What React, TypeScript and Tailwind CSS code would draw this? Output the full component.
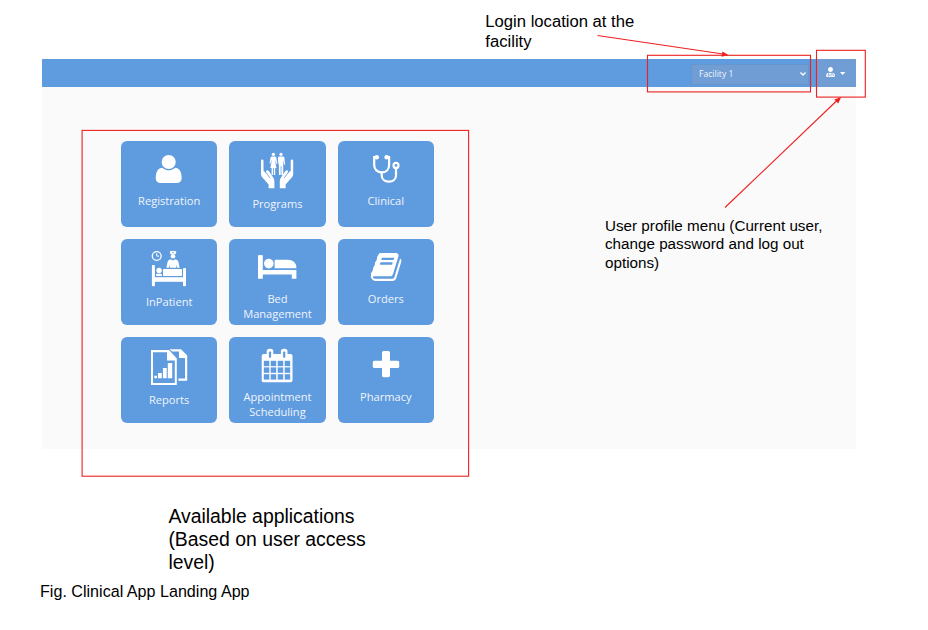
import type { ReactNode } from "react";
import { FaUserMd } from "react-icons/fa";

const BLUE = "#5f9bdf";

const UserIcon = () => (
  <path
    transform="translate(31.2 11.7) scale(.0184 .0182)"
    d="M1600 1405q0 120-73 189.5t-194 69.5h-874q-121 0-194-69.5t-73-189.5q0-53 3.5-103.5t14-109 26.5-108.5 43-97.5 62-81 85.5-53.5 111.5-20q9 0 42 21.5t74.5 48 108 48 133.5 21.5 133.5-21.5 108-48 74.5-48 42-21.5q61 0 111.5 20t85.5 53.5 62 81 43 97.5 26.5 108.5 14 109 3.5 103.5zm-320-893q0 159-112.5 271.5t-271.5 112.5-271.5-112.5-112.5-271.5 112.5-271.5 271.5-112.5 271.5 112.5 112.5 271.5z"
  />
);

const Hand = () => (
  <>
    <path d="M32 19.8Q32 18.4 33.2 18.4Q34.5 18.4 34.5 19.8V29.4L38.2 33.6L37 31.5Q36.6 29.6 38 29.2Q39 29 40 30.3L44.2 36.4Q45.4 38 45.4 40V47.3H39.6V43.4L33 36Q32 34.6 32 33Z" />
    <path d="M36.2 30.4L41 37" stroke={BLUE} strokeWidth=".8" fill="none" />
  </>
);

const ProgramsIcon = () => (
  <>
    <Hand />
    <g transform="matrix(-1 0 0 1 96.2 0)">
      <Hand />
    </g>
    <circle cx="44.4" cy="13.3" r="1.6" />
    <circle cx="52" cy="13.3" r="1.6" />
    <path d="M42.8 15.5H46Q47 15.5 47.3 16.5L48.2 22.4L47.4 22.8L45.9 18.5L47.5 27H46.2V34H44.8V27H44V34H42.6V27H41.3L42.9 18.5L41.3 22.8L40.5 22.4L41.6 16.5Q41.9 15.5 42.8 15.5Z" />
    <path d="M50.2 15.5H54Q55.2 15.5 55.4 16.7L56.1 23.4L55.1 23.7L54.2 18.5V34H52.4V25H51.7V34H49.9V18.5L49.5 23.6L48.8 23L49 16.7Q49.2 15.5 50.2 15.5Z" />
  </>
);

const StethoscopeIcon = () => (
  <>
    <g fill="none" stroke="white" strokeWidth="2.2" strokeLinecap="round">
      <path d="M38.5 16.2H36.2V24C36.2 28.5 39.5 31.4 43.7 31.4C47.9 31.4 51.1 28.5 51.1 24V16.2H48.8" />
      <path d="M43.7 31.5V34.3C43.7 38.2 46.7 40.7 50.9 40.7C55.1 40.7 58 38.2 58 34.3V28" />
      <circle cx="58" cy="24.4" r="2.5" />
    </g>
    <circle cx="38.8" cy="16.2" r="2.2" />
    <circle cx="48.6" cy="16.2" r="2.2" />
  </>
);

const InpatientIcon = () => (
  <>
    <circle cx="35.7" cy="17" r="4.4" fill="none" stroke="white" strokeWidth="1.3" />
    <path d="M35.7 14.2V17.1H38" fill="none" stroke="white" strokeWidth="1" />
    <path d="M48.6 12.6Q52 11 55.4 12.6L54.5 15.3H49.5Z" />
    <path d="M52 12.5V14.5M51 13.5H53" stroke={BLUE} strokeWidth=".5" />
    <circle cx="52" cy="17.2" r="2.3" />
    <path d="M49.5 20.2L52 21.4L54.5 20.2Q57 20.6 57.5 23L58.6 28.7H56.2L55.6 25.5L55.3 28.7H48.7L48.4 25.5L47.8 28.7H45.4L46.5 23Q47 20.6 49.5 20.2Z" />
    <rect x="30.9" y="26" width="3" height="21.3" rx="1" />
    <rect x="62" y="29" width="3" height="18.3" rx="1" />
    <rect x="33" y="38.2" width="30" height="4.6" />
    <circle cx="38.1" cy="31.5" r="2.7" />
    <rect x="35" y="34.8" width="6" height="2.2" rx="1" />
    <rect x="42" y="30" width="19" height="7" rx=".8" />
  </>
);

const BedIcon = () => (
  <>
    <path d="M30 16H32.8Q33.8 16 33.8 17V31H67.4V39.8H62.8V35.4H33.8V39.8H29V17Q29 16 30 16Z" />
    <circle cx="39.8" cy="24.6" r="4.8" />
    <path d="M46.6 20.8H59.5Q67.4 21.4 67.4 29.2H45.6V21.8Q45.6 20.8 46.6 20.8Z" />
  </>
);

const BookIcon = () => (
  <path
    transform="translate(32.8 11.7) scale(.0184 .0182)"
    d="M1639 478q40 57 18 129l-275 906q-19 64-76.5 107.5t-122.5 43.5h-923q-77 0-148.5-53.5t-99.5-131.5q-24-67-2-127 0-4 3-27t4-37q1-8-3-21.5t-3-19.5q2-11 8-21t16.5-23.5 16.5-23.5q23-38 45-91.5t30-91.5q3-10 .5-30t-.5-28q3-11 17-28t17-23q21-36 42-92t25-90q1-9-2.5-32t.5-28q4-13 22-30.5t22-22.5q19-26 42.5-84.5t27.5-96.5q1-8-3-25.5t-2-26.5q2-8 9-18t18-23 17-21q8-12 16.5-30.5t15-35 16-36 19.5-32 26.5-23.5 36-11.5 47.5 5.5l-1 3q38-9 51-9h761q74 0 114 56t18 130l-274 906q-36 119-71.5 153.5t-128.5 34.5h-869q-27 0-38 15-11 16-1 43 24 70 144 70h923q29 0 56-15.5t35-41.5l300-987q7-22 5-57 38 15 59 43zm-1064 2q-4 13 2 22.5t20 9.5h608q13 0 25.5-9.5t16.5-22.5l21-64q4-13-2-22.5t-20-9.5h-608q-13 0-25.5 9.5t-16.5 22.5zm-83 256q-4 13 2 22.5t20 9.5h608q13 0 25.5-9.5t16.5-22.5l21-64q4-13-2-22.5t-20-9.5h-608q-13 0-25.5 9.5t-16.5 22.5z"
  />
);

const ReportsIcon = () => (
  <>
    <path d="M48.6 12.2H60L66.2 18.4V43.8H57.4V41.6H64V21H58V14.4H51Z" />
    <path
      fillRule="evenodd"
      d="M30 13H48L55.8 21.4V48H30ZM32 15.2V46H53.8V23.4H46V15.2Z"
    />
    <path d="M33.3 38.8H36V41.2H33.3ZM37 36H40.8V41.2H37ZM41.9 31H45.7V41.2H41.9ZM46.8 26H51.2V41.2H46.8Z" />
  </>
);

const CalendarIcon = () => (
  <>
    <rect x="32.7" y="17" width="30.8" height="28.2" rx="2" />
    <rect x="37.7" y="11.8" width="6.6" height="10" rx="2.8" />
    <rect x="51.9" y="11.8" width="6.6" height="10" rx="2.8" />
    <g fill={BLUE}>
      <rect x="39.9" y="14.4" width="2.2" height="6.4" rx=".8" />
      <rect x="54.1" y="14.4" width="2.2" height="6.4" rx=".8" />
      {[23.8, 30.4, 37.2].map((y) =>
        [34.8, 41.7, 48.7, 55.7].map((x) => (
          <rect key={`${x}-${y}`} x={x} y={y} width="5.5" height="5.4" />
        )),
      )}
    </g>
  </>
);

const PlusIcon = () => (
  <>
    <rect x="34.8" y="23.8" width="26.4" height="7.2" rx="1.6" />
    <rect x="44" y="14" width="8" height="26.2" rx="1.6" />
  </>
);

const apps: { label: string; icon: ReactNode; tall?: boolean }[] = [
  { label: "Registration", icon: <UserIcon /> },
  { label: "Programs", icon: <ProgramsIcon />, tall: true },
  { label: "Clinical", icon: <StethoscopeIcon /> },
  { label: "InPatient", icon: <InpatientIcon />, tall: true },
  { label: "Bed Management", icon: <BedIcon /> },
  { label: "Orders", icon: <BookIcon /> },
  { label: "Reports", icon: <ReportsIcon />, tall: true },
  { label: "Appointment Scheduling", icon: <CalendarIcon /> },
  { label: "Pharmacy", icon: <PlusIcon /> },
];

function Tile({ label, icon, tall }: { label: string; icon: ReactNode; tall?: boolean }) {
  return (
    <button className="flex h-[86px] flex-col items-center rounded-[6px] bg-[#5f9bdf] font-['Open_Sans',sans-serif] text-[11.1px] leading-[14.2px] text-[#f0f5fc]">
      <svg
        viewBox="0 0 96 50"
        className={tall ? "mb-[6.4px] h-[50px] w-[96px] shrink-0" : "mb-[3.4px] h-[50px] w-[96px] shrink-0"}
        fill="white"
      >
        {icon}
      </svg>
      <span className="w-[82px] text-center">{label}</span>
    </button>
  );
}

export default function App() {
  return (
    <main className="relative h-[630px] w-[928px] overflow-hidden bg-white font-['Liberation_Sans',Arial,sans-serif] text-black">
      <p className="h-[59px] w-[660px] pl-[485.3px] pt-[12px] text-[16.65px] leading-[20.4px]">
        Login location at the facility
      </p>

      <section className="ml-[42px] h-[390px] w-[814px] bg-[#fafafa]">
        <header className="flex h-[28px] items-center justify-end bg-[#5f9bdf]">
          <div className="mr-[8px] mt-[2px] flex h-[21px] w-[118px] items-center justify-between border border-[#6795cd] bg-[#719dd5] pl-[7px] pr-[2px] font-['Open_Sans',sans-serif] text-[8.6px] text-[#f0f5fc]">
            <span>Facility 1</span>
            <svg width="6" height="4" viewBox="0 0 6 4" fill="none" stroke="white" strokeWidth="1.4">
              <path d="M.5 .6L3 3L5.5 .6" />
            </svg>
          </div>
          <div className="flex h-full w-[39px] items-start gap-[5px] bg-[#719dd5] pl-[9px] pt-[7.5px]">
            <FaUserMd className="h-[10px] w-[9px] text-white" />
            <svg width="6" height="3" viewBox="0 0 6 3" fill="white" className="mt-[5px]">
              <path d="M0 0H5.4L2.7 3Z" />
            </svg>
          </div>
        </header>

        <div className="flex items-start pl-[79px]">
          <div className="grid w-[313px] grid-cols-3 gap-[12px] pt-[54px]">
            {apps.map((app) => (
              <Tile key={app.label} {...app} />
            ))}
          </div>
          <p className="ml-[171px] mt-[130px] w-[225px] text-[15.22px] leading-[18.3px]">
            User profile menu (Current user, change password and log out options)
          </p>
        </div>
      </section>

      <p className="ml-[168.4px] mt-[55.5px] w-[205px] text-[19.4px] leading-[23.3px]">
        Available applications (Based on user access level)
      </p>
      <p className="ml-[40px] mt-[6.6px] text-[16.13px] leading-[20px]">Fig. Clinical App Landing App</p>

      <svg
        className="pointer-events-none absolute inset-0"
        width="928"
        height="630"
        viewBox="0 0 928 630"
        fill="none"
        stroke="#ee2020"
        strokeWidth="1.1"
      >
        <rect x="82.1" y="130.4" width="386.5" height="345.8" />
        <rect x="647.5" y="55.3" width="163" height="36.6" />
        <rect x="816.5" y="50.3" width="48.8" height="46.8" />
        <path d="M597.5 35.5L723 54" />
        <path d="M725 207.5L837 100.5" />
        <path d="M728.5 55L721.6 56.7L722.4 51.5Z" fill="#ee2020" stroke="none" />
        <path d="M841.2 97L838.2 103.6L834.3 99.5Z" fill="#ee2020" stroke="none" />
      </svg>
    </main>
  );
}
